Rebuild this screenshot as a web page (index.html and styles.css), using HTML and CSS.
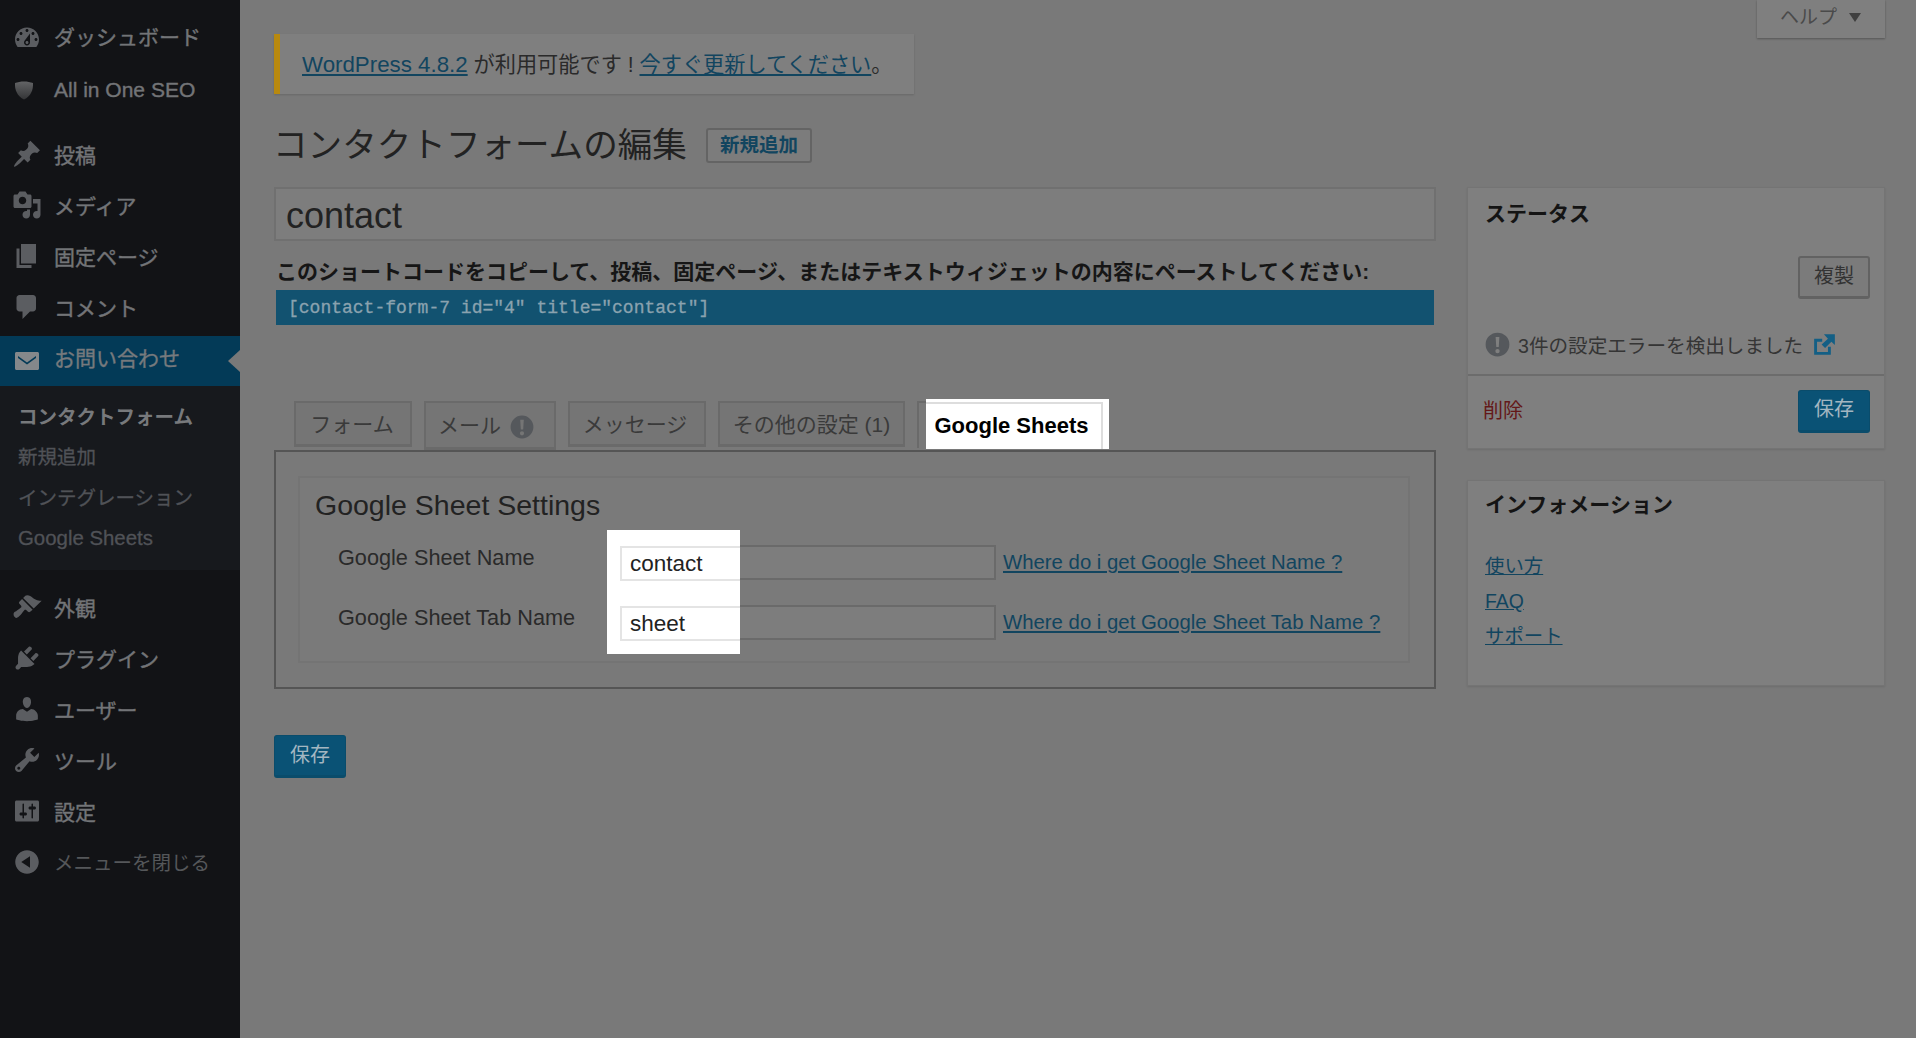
FILE: index.html
```html
<!DOCTYPE html>
<html lang="ja">
<head>
    <meta charset="UTF-8">
    <title>コンタクトフォームの編集</title>
    <link rel="stylesheet" href="styles.css">
</head>
<body>
    <nav class="sidebar">
        <ul class="menu">
            <li class="menu-item menu-item-first"><svg class="menu-icon" viewBox="0 0 20 20"><path fill-rule="evenodd" d="M3.76 16h12.48c1.1-1.37 1.76-3.11 1.76-5 0-4.42-3.58-8-8-8s-8 3.58-8 8c0 1.89.66 3.63 1.76 5zM10 4c.55 0 1 .45 1 1s-.45 1-1 1-1-.45-1-1 .45-1 1-1zM6 6c.55 0 1 .45 1 1s-.45 1-1 1-1-.45-1-1 .45-1 1-1zm8 0c.55 0 1 .45 1 1s-.45 1-1 1-1-.45-1-1 .45-1 1-1zm-5.37 5.55L12 7v6c0 1.1-.9 2-2 2s-2-.9-2-2c0-.57.24-1.08.63-1.45zM4 10c.55 0 1 .45 1 1s-.45 1-1 1-1-.45-1-1 .45-1 1-1zm12 0c.55 0 1 .45 1 1s-.45 1-1 1-1-.45-1-1 .45-1 1-1zm-5 3c0-.55-.45-1-1-1s-1 .45-1 1 .45 1 1 1 1-.45 1-1z"/></svg>ダッシュボード</li>
            <li class="menu-item menu-item-last"><svg class="menu-icon" viewBox="0 0 20 20"><defs><linearGradient id="shield" x1="0" y1="0" x2="0" y2="1"><stop offset="0" stop-color="#636466"/><stop offset="1" stop-color="#333436"/></linearGradient></defs><path fill="url(#shield)" d="M8 4.300c2.200 0 4.300.4 6 1 .3 4.600-1.500 8.800-6 11C3.500 14.100 1.700 9.900 2 5.300c1.700-.6 3.800-1 6-1z"/></svg>All in One SEO</li>
            <li class="menu-item"><svg class="menu-icon" viewBox="0 0 20 20"><path d="M10.44 3.02l1.82-1.82 6.36 6.35-1.83 1.82c-1.05-.68-2.48-.57-3.41.36l-.75.75c-.92.93-1.04 2.35-.35 3.41l-1.83 1.82-2.41-2.41-2.8 2.79c-.42.42-3.38 2.71-3.8 2.29s1.86-3.39 2.28-3.81l2.79-2.79L4.100 9.360l1.83-1.82c1.05.69 2.48.57 3.4-.36l.75-.75c.93-.92 1.05-2.35.36-3.41z"/></svg>投稿</li>
            <li class="menu-item"><svg class="menu-icon" viewBox="0 0 20 20"><path fill-rule="evenodd" d="M13 11V4c0-.55-.45-1-1-1h-1.670L9 1H5L3.670 3H2c-.55 0-1 .45-1 1v7c0 .55.45 1 1 1h10c.55 0 1-.45 1-1zM7 4.500c1.380 0 2.500 1.120 2.500 2.500S8.380 9.500 7 9.500 4.500 8.380 4.500 7 5.620 4.500 7 4.500zM14 6h5v10.500c0 1.380-1.120 2.500-2.500 2.500S14 17.880 14 16.500s1.120-2.500 2.500-2.500c.17 0 .34.02.5.05V9h-3V6zm-4 8.050V13h2v3.500c0 1.380-1.120 2.500-2.500 2.500S7 17.880 7 16.500 8.120 14 9.500 14c.17 0 .34.02.5.05z"/></svg>メディア</li>
            <li class="menu-item"><svg class="menu-icon" viewBox="0 0 20 20"><path d="M6 15V2h10v13H6zm-1 1h8v2H3V5h2v11z"/></svg>固定ページ</li>
            <li class="menu-item"><svg class="menu-icon" viewBox="0 0 20 20"><path d="M5 2h9c1.100 0 2 .9 2 2v7c0 1.100-.9 2-2 2h-2l-5 5v-5H5c-1.100 0-2-.9-2-2V4c0-1.100.9-2 2-2z"/></svg>コメント</li>
            <li class="menu-item menu-item-active"><svg class="menu-icon" viewBox="0 0 20 20"><path fill-rule="evenodd" d="M3 4h14c.55 0 1 .45 1 1v10c0 .55-.45 1-1 1H3c-.55 0-1-.45-1-1V5c0-.55.45-1 1-1zm13 2.700L10 11 4 6.700V8l6 4.300L16 8V6.700z"/></svg>お問い合わせ</li>
        </ul>
        <ul class="submenu">
            <li class="submenu-item submenu-current">コンタクトフォーム</li>
            <li class="submenu-item">新規追加</li>
            <li class="submenu-item">インテグレーション</li>
            <li class="submenu-item submenu-latin">Google Sheets</li>
        </ul>
        <ul class="menu menu-lower">
            <li class="menu-item"><svg class="menu-icon" viewBox="0 0 20 20"><path d="M14.480 11.060L7.410 3.990l1.500-1.500c.5-.56 2.300-.47 3.510.32 1.210.8 1.430 1.280 2.910 2.100 1.180.64 2.450 1.260 4.450.85zm-.71.71L6.700 4.700 4.930 6.470c-.39.39-.39 1.020 0 1.410l1.060 1.060c.39.39.39 1.030 0 1.420-.6.6-1.430 1.110-2.210 1.690-.35.26-.7.53-1.010.84C1.430 13.230.92 14.090 1.060 15.200c.13.94.6 1.470 1.340 1.930.16.1.33.14.52.14.93 0 1.690-.82 2.750-1.870.31-.31.58-.66.84-1.010.58-.78 1.090-1.610 1.690-2.210.39-.39 1.030-.39 1.420 0l1.060 1.060c.39.39 1.020.39 1.410 0z"/></svg>外観</li>
            <li class="menu-item"><svg class="menu-icon" viewBox="0 0 20 20"><path d="M13.110 4.360L9.870 7.600 8 5.730l3.240-3.240c.35-.34 1.050-.2 1.560.32.52.51.66 1.210.31 1.550zm-8 1.770l.91-1.120 9.010 9.010-1.190.84c-.71.71-2.630 1.160-3.820 1.160H6.140L4.900 17.260c-.59.59-1.540.59-2.120 0-.59-.58-.59-1.530 0-2.120l1.240-1.240v-3.880c0-1.130.4-3.190 1.090-3.890zm7.260 3.970l3.240-3.240c.34-.35 1.040-.21 1.550.31.52.51.66 1.210.31 1.550l-3.240 3.250z"/></svg>プラグイン</li>
            <li class="menu-item"><svg class="menu-icon" viewBox="0 0 20 20"><path d="M10 9.250c-2.270 0-2.730-3.440-2.730-3.440C7 4.020 7.820 2 9.970 2c2.160 0 2.980 2.020 2.710 3.810 0 0-.41 3.440-2.680 3.440zm0 2.570L12.720 10c2.390 0 4.520 2.330 4.520 4.530v2.490s-3.650 1.130-7.240 1.130c-3.650 0-7.240-1.130-7.240-1.130v-2.490c0-2.250 1.940-4.480 4.470-4.480z"/></svg>ユーザー</li>
            <li class="menu-item"><svg class="menu-icon" viewBox="0 0 20 20"><path fill-rule="evenodd" d="M16.680 9.770c-1.340 1.340-3.300 1.670-4.950.99l-5.410 6.520c-.99.99-2.590.99-3.580 0s-.99-2.590 0-3.570l6.520-5.420c-.68-1.650-.35-3.610.99-4.950 1.280-1.280 3.120-1.620 4.720-1.060l-2.890 2.890 2.820 2.820 2.860-2.870c.53 1.580.18 3.390-1.080 4.650zM3.810 16.210c.4.39 1.040.39 1.430 0 .4-.4.4-1.040 0-1.430-.39-.4-1.030-.4-1.430 0-.39.39-.39 1.030 0 1.430z"/></svg>ツール</li>
            <li class="menu-item"><svg class="menu-icon" viewBox="0 0 20 20"><path fill-rule="evenodd" d="M18 16V4c0-.55-.45-1-1-1H3c-.55 0-1 .45-1 1v12c0 .55.45 1 1 1h14c.55 0 1-.45 1-1zM8 11h1c.55 0 1 .45 1 1s-.45 1-1 1H8v1.500c0 .28-.22.5-.5.5s-.5-.22-.5-.5V13H6c-.55 0-1-.45-1-1s.45-1 1-1h1V5.500c0-.28.22-.5.5-.5s.5.22.5.5V11zm5-2h-1c-.55 0-1-.45-1-1s.45-1 1-1h1V5.500c0-.28.22-.5.5-.5s.5.22.5.5V7h1c.55 0 1 .45 1 1s-.45 1-1 1h-1v5.500c0 .28-.22.5-.5.5s-.5-.22-.5-.5V9z"/></svg>設定</li>
            <li class="menu-item menu-collapse"><svg class="menu-icon" viewBox="0 0 20 20"><path fill-rule="evenodd" d="M10 2.160c4.330 0 7.840 3.510 7.840 7.840s-3.510 7.840-7.840 7.840S2.160 14.330 2.160 10 5.710 2.160 10 2.160zm2 11.720V6.120L6.180 9.970z"/></svg>メニューを閉じる</li>
        </ul>
    </nav>

    <main class="content">
        <div class="help-tab">ヘルプ<span class="help-arrow"></span></div>

        <div class="notice"><a class="notice-version" href="#">WordPress 4.8.2</a> が利用可能です ! <a href="#">今すぐ更新してください</a>。</div>

        <div class="title-row">
            <h1>コンタクトフォームの編集</h1>
            <a class="add-new" href="#">新規追加</a>
        </div>

        <div class="columns">
            <div class="col-main">
                <div class="title-input">contact</div>
                <p class="shortcode-label">このショートコードをコピーして、投稿、固定ページ、またはテキストウィジェットの内容にペーストしてください:</p>
                <div class="shortcode">[contact-form-7 id="4" title="contact"]</div>

                <div class="tabs">
                    <div class="tab tab-form">フォーム</div>
                    <div class="tab tab-mail">メール<svg class="tab-warning" viewBox="0 0 20 20"><path fill-rule="evenodd" d="M10 .5a9.500 9.500 0 1 1 0 19 9.500 9.500 0 0 1 0-19zM8.500 4l.5 8h2l.5-8h-3zM10 13.500a1.750 1.750 0 1 0 0 3.500 1.750 1.750 0 0 0 0-3.500z"/></svg></div>
                    <div class="tab tab-message">メッセージ</div>
                    <div class="tab tab-other">その他の設定 (1)</div>
                    <div class="tab tab-sheets"><div class="tab-spot">Google Sheets</div></div>
                </div>

                <div class="panel">
                    <div class="settings">
                        <h2>Google Sheet Settings</h2>
                        <div class="field">
                            <label>Google Sheet Name</label>
                            <div class="field-input"></div>
                            <a href="#">Where do i get Google Sheet Name ?</a>
                        </div>
                        <div class="field">
                            <label>Google Sheet Tab Name</label>
                            <div class="field-input"></div>
                            <a href="#">Where do i get Google Sheet Tab Name ?</a>
                        </div>
                    </div>
                    <div class="spot">
                        <div class="spot-input">contact</div>
                        <div class="spot-input">sheet</div>
                    </div>
                </div>

                <button class="btn-primary btn-save-main">保存</button>
            </div>

            <aside class="col-side">
                <section class="box">
                    <h3>ステータス</h3>
                    <div class="box-actions"><button class="btn-secondary">複製</button></div>
                    <div class="box-errors">
                        <svg class="error-icon" viewBox="0 0 20 20"><path fill-rule="evenodd" d="M10 .5a9.500 9.500 0 1 1 0 19 9.500 9.500 0 0 1 0-19zM8.500 4l.5 8h2l.5-8h-3zM10 13.500a1.750 1.750 0 1 0 0 3.500 1.750 1.750 0 0 0 0-3.500z"/></svg>
                        <span>3件の設定エラーを検出しました</span>
                        <svg class="external-icon" viewBox="0 0 20 20"><path d="M9.500 1H19v9.500l-3-3-5.500 5.500-3-3L13 5 9.500 1zM1 5h7v2.500H3.500v9H13V12h2.500v7H1V5z"/></svg>
                    </div>
                    <div class="box-footer">
                        <a class="delete" href="#">削除</a>
                        <button class="btn-primary">保存</button>
                    </div>
                </section>
                <section class="box box-info">
                    <h3>インフォメーション</h3>
                    <ul class="info-links">
                        <li><a href="#">使い方</a></li>
                        <li><a href="#">FAQ</a></li>
                        <li><a href="#">サポート</a></li>
                    </ul>
                </section>
            </aside>
        </div>
    </main>
</body>
</html>
```

FILE: styles.css
```css
* {
    box-sizing: border-box;
}
body {
    margin: 0;
    height: 1038px;
    overflow: hidden;
    display: flex;
    font-family: "Liberation Sans", "Noto Sans CJK JP", sans-serif;
    font-size: 20px;
    color: #1d1e1f;
    background: #797979;
}
a {
    color: #12455f;
}
ul {
    list-style: none;
    margin: 0;
    padding: 0;
}

/* sidebar */
.sidebar {
    width: 240px;
    flex-shrink: 0;
    padding-top: 10px;
    background: #121316;
}
.menu-item {
    display: flex;
    align-items: center;
    gap: 12px;
    height: 51px;
    padding-left: 12px;
    font-size: 21px;
    color: #727477;
    -webkit-text-stroke: 0.4px #727477;
}
.menu-item-first {
    margin-bottom: 3px;
}
.menu-item-first .menu-icon {
    margin-top: 4px;
}
.menu-item-last {
    margin-bottom: 13px;
}
.menu-icon {
    width: 30px;
    height: 30px;
    flex-shrink: 0;
    fill: #5b5d61;
}
.menu-item-active {
    position: relative;
    height: 50px;
    margin-top: 4px;
    padding-bottom: 8px;
    background: #033a57;
    color: #777c80;
}
.menu-item-active .menu-icon {
    margin-top: 8px;
    fill: #85888b;
}
.menu-item-active::after {
    content: "";
    position: absolute;
    right: 0;
    top: 14px;
    border: 11px solid transparent;
    border-left: 0;
    border-right: 12px solid #797979;
}
.submenu {
    height: 184px;
    padding-top: 11px;
    background: #17191d;
}
.submenu-item {
    height: 40.300px;
    padding-left: 18px;
    line-height: 40px;
    font-size: 19.500px;
    color: #505257;
    -webkit-text-stroke: 0.3px #505257;
}
.submenu-current {
    font-weight: bold;
    color: #77797c;
    -webkit-text-stroke: 0;
}
.submenu-latin {
    font-size: 20.400px;
}
.menu-lower {
    padding-top: 11px;
}
.menu-collapse {
    font-size: 19.500px;
    color: #55575a;
    -webkit-text-stroke: 0;
}

/* main column */
.content {
    position: relative;
    flex: 1;
    padding: 34px 32px 0 34px;
}
.help-tab {
    position: absolute;
    top: 0;
    right: 32px;
    width: 128px;
    height: 38px;
    padding-left: 23px;
    line-height: 36px;
    font-size: 19px;
    color: #4a4a4a;
    background: #7f7f7f;
    box-shadow: 0 1px 2px rgba(0, 0, 0, 0.3);
}
.help-arrow {
    display: inline-block;
    margin-left: 12px;
    vertical-align: 2px;
    border: 6px solid transparent;
    border-top: 9px solid #404040;
    border-bottom: 0;
}
.notice {
    width: 640px;
    height: 60px;
    padding-left: 22px;
    border-left: 6px solid #b8890f;
    line-height: 62px;
    font-size: 21.200px;
    color: #2a2a2a;
    background: #7f7f7f;
    box-shadow: 0 1px 2px rgba(0, 0, 0, 0.15);
    white-space: nowrap;
}
.notice-version {
    font-size: 22.300px;
}
.title-row {
    display: flex;
    align-items: center;
    gap: 19px;
    height: 35px;
    margin: 34px 0 24px;
}
h1 {
    margin: 0 0 7px -1px;
    font-size: 34.600px;
    font-weight: normal;
    color: #222;
}
.add-new {
    height: 35px;
    padding: 0 12px;
    border: 2px solid #646464;
    border-radius: 3px;
    line-height: 30px;
    font-size: 19.500px;
    font-weight: bold;
    text-decoration: none;
    color: #12455f;
    background: #7c7c7c;
}
.columns {
    display: flex;
    gap: 31px;
}
.col-main {
    width: 1162px;
}
.col-side {
    width: 418px;
}
.title-input {
    height: 54px;
    padding-left: 10px;
    border: 2px solid #707070;
    line-height: 54px;
    font-size: 36px;
    color: #222;
    background: #7d7d7d;
}
.shortcode-label {
    margin: 19px 0 0 2px;
    line-height: 24px;
    font-size: 21px;
    font-weight: bold;
    color: #161616;
    white-space: nowrap;
}
.shortcode {
    height: 35px;
    margin: 6px 2px 0;
    padding-left: 12px;
    line-height: 36px;
    font-family: "Liberation Mono", "Noto Sans CJK JP", monospace;
    font-size: 18px;
    color: #8aa2af;
    background: #125270;
    -webkit-text-stroke: 0.3px #8aa2af;
}

/* tabs */
.tabs {
    display: flex;
    gap: 12px;
    height: 49px;
    margin: 76px 0 0 20px;
}
.tab {
    height: 46px;
    border: 2px solid #6a6a6a;
    border-bottom-width: 3px;
    line-height: 44px;
    font-size: 21px;
    text-align: center;
    color: #3a3a3a;
    background: #757575;
}
.tab-form {
    width: 118px;
    padding-right: 2px;
}
.tab-mail {
    display: flex;
    align-items: center;
    justify-content: center;
    gap: 9px;
    width: 132px;
    height: 49px;
    padding-top: 2px;
    padding-right: 8px;
}
.tab-warning {
    width: 24px;
    height: 24px;
    margin-top: 2px;
    fill: #55585c;
}
.tab-message {
    width: 138px;
    padding-right: 4px;
}
.tab-other {
    width: 187px;
}
.tab-sheets {
    position: relative;
    width: 186px;
    height: 47px;
    border-bottom: 0;
    background: #797979;
}
.tab-spot {
    position: absolute;
    top: -4px;
    left: 7px;
    right: -8px;
    height: 50px;
    padding-top: 3px;
    padding-right: 12px;
    border-top: 3px solid #fff;
    line-height: 42px;
    font-size: 22px;
    font-weight: bold;
    color: #000;
    background: #fff;
    box-shadow: inset -6px 0 0 #fff, inset -8px 0 0 #ddd, inset 0 2px 0 #ddd;
}
.panel {
    position: relative;
    height: 239px;
    padding: 24px 24px 24px 22px;
    border: 2px solid #555;
}
.settings {
    height: 187px;
    padding: 11px 15px;
    border: 2px solid #747474;
    background: #7a7a7a;
}
h2 {
    margin: 0;
    line-height: 32px;
    font-size: 28.500px;
    font-weight: normal;
    color: #222;
}
.field {
    display: flex;
    align-items: center;
    height: 35px;
    margin: 24px 0 25px -1px;
    white-space: nowrap;
}
.field:last-child {
    margin-top: 0;
}
.field label {
    width: 282px;
    margin-left: 24px;
    margin-top: -10px;
    font-size: 21.700px;
    color: #2a2a2a;
}
.field-input {
    width: 376px;
    height: 35px;
    border: 2px solid #6a6a6a;
    background: #7d7d7d;
}
.field a {
    margin-left: 7px;
    font-size: 20.350px;
}
.spot {
    position: absolute;
    left: 331px;
    top: 78px;
    display: flex;
    flex-direction: column;
    gap: 25px;
    width: 133px;
    height: 124px;
    padding: 16px 0 0 13px;
    background: #fff;
}
.spot-input {
    height: 35px;
    padding-left: 8px;
    border: 2px solid #e4e4e4;
    border-right: 0;
    line-height: 32px;
    font-size: 22.500px;
    color: #222;
}

/* buttons */
.btn-primary,
.btn-secondary {
    width: 72px;
    height: 43px;
    padding: 0 0 5px;
    border-radius: 3px;
    font-family: inherit;
    font-size: 20px;
}
.btn-primary {
    border: 1px solid #0a4c6b;
    border-bottom-width: 3px;
    color: #a3b6c1;
    background: #0a5275;
}
.btn-secondary {
    border: 2px solid #626262;
    border-bottom-width: 3px;
    color: #333;
    background: #7b7b7b;
}
.btn-save-main {
    display: block;
    margin-top: 46px;
}

/* right side boxes */
.box {
    margin-bottom: 31px;
    border: 1px solid #747474;
    background: #7f7f7f;
    box-shadow: 0 1px 2px rgba(0, 0, 0, 0.1);
}
h3 {
    margin: 0;
    padding: 12px 17px 10px;
    line-height: 28px;
    font-size: 21px;
    font-weight: bold;
    color: #141414;
}
.box-actions {
    display: flex;
    justify-content: flex-end;
    height: 58px;
    margin-top: 18px;
    padding-right: 14px;
}
.box-errors {
    display: flex;
    align-items: center;
    height: 37px;
    margin-top: 12px;
    margin-bottom: 11px;
    padding-left: 17px;
    font-size: 19.600px;
    color: #353535;
    white-space: nowrap;
}
.error-icon {
    width: 25px;
    height: 25px;
    margin-right: 8px;
    fill: #55585c;
}
.external-icon {
    width: 23px;
    height: 23px;
    margin-left: 10px;
    fill: #135f85;
}
.box-footer {
    display: flex;
    align-items: center;
    justify-content: space-between;
    height: 74px;
    padding: 0 14px 2px 15px;
    border-top: 2px solid #6c6c6c;
}
.delete {
    margin-bottom: 4px;
    text-decoration: none;
    color: #641818;
}
.box-info {
    height: 206px;
}
.box-info h3 {
    padding-top: 10px;
}
.info-links {
    padding: 21px 17px 0;
}
.info-links li {
    height: 35px;
    line-height: 32px;
    font-size: 19.400px;
}
```
